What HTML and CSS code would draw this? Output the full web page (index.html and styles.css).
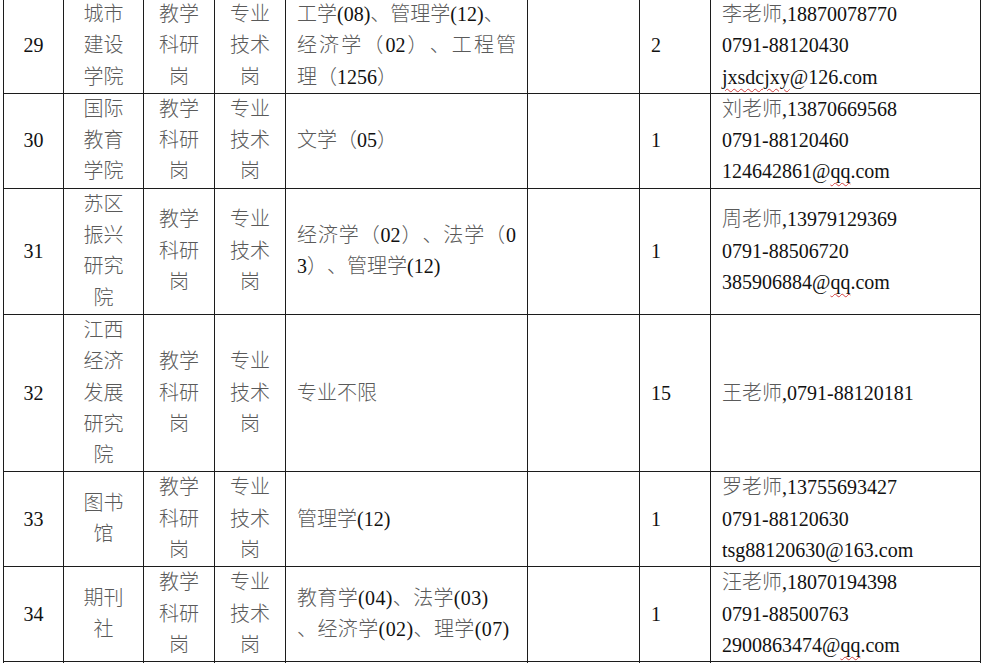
FILE: index.html
```html
<!DOCTYPE html>
<html lang="zh-CN">
<head>
<meta charset="utf-8">
<title>岗位表</title>
<link rel="stylesheet" href="styles.css">
</head>
<body>
<div class="page">
<table class="grid">
  <colgroup>
    <col class="w-no"><col class="w-unit"><col class="w-type"><col class="w-post"><col class="w-major"><col class="w-blank"><col class="w-num"><col class="w-contact">
  </colgroup>
  <tr>
    <td class="c">29</td>
    <td class="c"><span class="z">城市<br>建设<br>学院</span></td>
    <td class="c"><span class="z">教学<br>科研<br>岗</span></td>
    <td class="c"><span class="z">专业<br>技术<br>岗</span></td>
    <td>
      <div><span class="z">工学</span>(08)<span class="z">、管理学</span>(12)<span class="z">、</span></div>
      <div class="j"><span class="z">经济学（</span>02<span class="z">）、工程管</span></div>
      <div><span class="z">理（</span>1256<span class="z">）</span></div>
    </td>
    <td></td>
    <td>2</td>
    <td>
      <div><span class="z">李老师</span>,18870078770</div>
      <div>0791-88120430</div>
      <div><span class="sp">jxsdcjxy</span>@126.com</div>
    </td>
  </tr>
  <tr>
    <td class="c">30</td>
    <td class="c"><span class="z">国际<br>教育<br>学院</span></td>
    <td class="c"><span class="z">教学<br>科研<br>岗</span></td>
    <td class="c"><span class="z">专业<br>技术<br>岗</span></td>
    <td><span class="z">文学（</span>05<span class="z">）</span></td>
    <td></td>
    <td>1</td>
    <td>
      <div><span class="z">刘老师</span>,13870669568</div>
      <div>0791-88120460</div>
      <div>124642861@<span class="sp">qq</span>.com</div>
    </td>
  </tr>
  <tr>
    <td class="c">31</td>
    <td class="c"><span class="z">苏区<br>振兴<br>研究<br>院</span></td>
    <td class="c"><span class="z">教学<br>科研<br>岗</span></td>
    <td class="c"><span class="z">专业<br>技术<br>岗</span></td>
    <td>
      <div class="j"><span class="z">经济学（</span>02<span class="z">）、法学（</span>0</div>
      <div>3<span class="z">）、管理学</span>(12)</div>
    </td>
    <td></td>
    <td>1</td>
    <td>
      <div><span class="z">周老师</span>,13979129369</div>
      <div>0791-88506720</div>
      <div>385906884@<span class="sp">qq</span>.com</div>
    </td>
  </tr>
  <tr>
    <td class="c">32</td>
    <td class="c"><span class="z">江西<br>经济<br>发展<br>研究<br>院</span></td>
    <td class="c"><span class="z">教学<br>科研<br>岗</span></td>
    <td class="c"><span class="z">专业<br>技术<br>岗</span></td>
    <td><span class="z">专业不限</span></td>
    <td></td>
    <td>15</td>
    <td><span class="z">王老师</span>,0791-88120181</td>
  </tr>
  <tr>
    <td class="c">33</td>
    <td class="c"><span class="z">图书<br>馆</span></td>
    <td class="c"><span class="z">教学<br>科研<br>岗</span></td>
    <td class="c"><span class="z">专业<br>技术<br>岗</span></td>
    <td><span class="z">管理学</span>(12)</td>
    <td></td>
    <td>1</td>
    <td>
      <div><span class="z">罗老师</span>,13755693427</div>
      <div>0791-88120630</div>
      <div>tsg88120630@163.com</div>
    </td>
  </tr>
  <tr>
    <td class="c">34</td>
    <td class="c"><span class="z">期刊<br>社</span></td>
    <td class="c"><span class="z">教学<br>科研<br>岗</span></td>
    <td class="c"><span class="z">专业<br>技术<br>岗</span></td>
    <td>
      <div class="wide1"><span class="z">教育学</span>(04)<span class="z">、法学</span>(03)</div>
      <div class="wide2"><span class="z">、经济学</span>(02)<span class="z">、理学</span>(07)</div>
    </td>
    <td></td>
    <td>1</td>
    <td>
      <div><span class="z">汪老师</span>,18070194398</div>
      <div>0791-88500763</div>
      <div>2900863474@<span class="sp">qq</span>.com</div>
    </td>
  </tr>
  <tr class="tail">
    <td></td><td></td><td></td><td></td><td></td><td></td><td></td><td></td>
  </tr>
</table>
</div>
</body>
</html>
```
FILE: styles.css
```css
html, body {
  margin: 0;
  padding: 0;
  background: #ffffff;
  overflow: hidden;
}

.page {
  padding-left: 3px;
}

.grid {
  margin-top: -2px;
  border-collapse: collapse;
  table-layout: fixed;
  width: 977px;
  font-family: "Liberation Serif", "Noto Sans CJK SC", serif;
  font-size: 20px;
  line-height: 31.3px;
  color: #111111;
  text-spacing-trim: space-all;
}

.w-no { width: 60px; }
.w-unit { width: 80px; }
.w-type { width: 71px; }
.w-post { width: 71px; }
.w-major { width: 242px; }
.w-blank { width: 112px; }
.w-num { width: 71px; }
.w-contact { width: 270px; }

.grid td {
  border: 1px solid #1c1c1c;
  padding: 0 11px;
  vertical-align: middle;
  text-align: left;
  white-space: nowrap;
}

.grid td.c {
  text-align: center;
  padding: 0;
}

.z {
  color: #5a5a5a;
  font-weight: 300;
}

.j {
  text-align: justify;
  text-align-last: justify;
}

.wide1 {
  letter-spacing: 0.35px;
}

.wide2 {
  letter-spacing: 0.4px;
}

.sp {
  text-decoration: underline wavy #d04040;
  text-decoration-thickness: 1px;
  text-underline-offset: 4px;
}

.tail td {
  height: 20px;
}
```
